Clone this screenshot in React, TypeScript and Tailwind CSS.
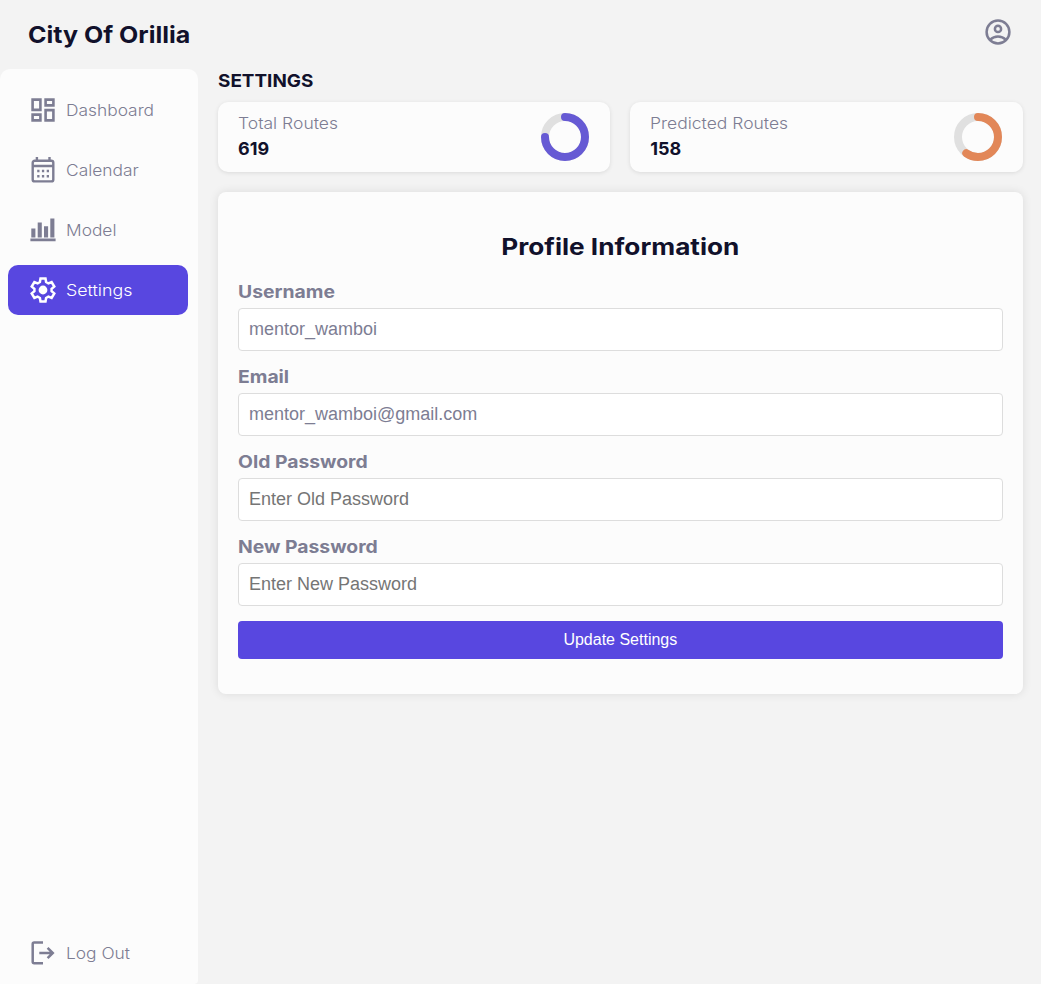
import type { ReactNode } from 'react';

function AccountIcon() {
  return (
    <svg width="30" height="30" viewBox="0 0 30 30" fill="none" stroke="currentColor" strokeWidth="2.5">
      <circle cx="15" cy="15" r="11.4" />
      <circle cx="15" cy="11.9" r="3.1" />
      <path d="M7.3 22.6c2-2.1 4.7-3.2 7.7-3.2s5.7 1.1 7.7 3.2" />
    </svg>
  );
}

function DashboardIcon() {
  return (
    <svg width="28" height="28" viewBox="0 0 28 28" fill="none" stroke="currentColor" strokeWidth="2.6">
      <path d="M3.6 3.6h7.8v10.3H3.6zM16.6 3.6h7.8v5.8h-7.8zM3.6 18.6h7.8v5.8H3.6zM16.6 14.1h7.8v10.3h-7.8z" />
    </svg>
  );
}

function CalendarIcon() {
  return (
    <svg width="28" height="28" viewBox="0 0 28 28" fill="none" stroke="currentColor" strokeWidth="2.4">
      <rect x="3.7" y="4.7" width="20.6" height="20.7" rx="2" />
      <path d="M3.7 10h20.6M7.9 1v3.5M20.5 1v3.5" />
      <path d="M8.2 15h2.3M12.9 15h2.3M17.7 15H20M8.2 20.2h2.3M12.9 20.2h2.3M17.7 20.2H20" />
    </svg>
  );
}

function ChartIcon() {
  return (
    <svg width="28" height="28" viewBox="0 0 28 28" fill="currentColor">
      <path d="M1.4 22.6h25.2v2.7H1.4zM2.3 12.6h4.1v8.8H2.3zM8.7 6.4h4.1v15H8.7zM15 10.2h4.1v11.2H15zM21.3 2.4h4.1v19h-4.1z" />
    </svg>
  );
}

function GearIcon() {
  return (
    <svg width="28" height="28" viewBox="0 0 28 28" fill="none" stroke="currentColor" strokeWidth="2.5">
      <path d="M11.5 2.6h5l.6 3.4 2.3 1.3 3.2-1.2 2.7 4.5-2.7 2.3v2.2l2.7 2.3-2.7 4.5-3.2-1.2-2.3 1.3-.6 3.4h-5l-.6-3.4-2.3-1.3-3.2 1.2-2.7-4.5 2.7-2.3v-2.2l-2.7-2.3 2.7-4.5 3.2 1.2 2.3-1.3z" />
      <circle cx="14" cy="14" r="4.4" fill="currentColor" stroke="none" />
    </svg>
  );
}

function LogoutIcon() {
  return (
    <svg width="28" height="28" viewBox="0 0 28 28" fill="none" stroke="currentColor" strokeWidth="2.5">
      <path d="M14 3.6H5.2Q3.7 3.6 3.7 5.1v17.6Q3.7 24.2 5.2 24.2H14" />
      <path d="M10.3 14h13.6M18.6 8.8l5.2 5.2-5.2 5.2" />
    </svg>
  );
}

function NavItem({ icon, label, active = false }: { icon: ReactNode; label: string; active?: boolean }) {
  return (
    <a
      className={
        active
          ? 'flex h-[50px] items-center gap-[9px] rounded-[10px] bg-[#5847e0] pl-[21px] text-white'
          : 'flex h-[50px] items-center gap-[9px] rounded-[10px] pl-[21px] text-[#7d7d93]'
      }
    >
      <span className="flex size-7 shrink-0 items-center justify-center">{icon}</span>
      <span
        className={
          active
            ? 'origin-left scale-x-[1.15] pt-[2px] text-[15.5px] font-[350]'
            : 'origin-left scale-x-[1.12] pt-[2px] text-[15.5px] font-light'
        }
      >
        {label}
      </span>
    </a>
  );
}

function Ring({ percent, color }: { percent: number; color: string }) {
  return (
    <svg width="48" height="48" viewBox="0 0 48 48" fill="none" strokeWidth="8">
      <circle cx="24" cy="24" r="20" stroke="#e0e0e0" />
      <circle
        cx="24"
        cy="24"
        r="20"
        stroke={color}
        strokeLinecap="round"
        pathLength={100}
        strokeDasharray={`${percent} 100`}
        transform="rotate(-90 24 24)"
      />
    </svg>
  );
}

function StatCard({ label, value, percent, color }: { label: string; value: string; percent: number; color: string }) {
  return (
    <div className="flex h-[70px] flex-1 items-center justify-between rounded-[10px] bg-[#fcfcfc] pr-[21px] pl-5 shadow-[0_1px_4px_rgba(0,0,0,0.1)]">
      <div className="pb-[2px]">
        <div className="h-[25px] origin-left scale-x-[1.13] text-[15.5px] leading-[25px] font-light text-[#7d7d93]">{label}</div>
        <div className="h-[25px] text-[18px] leading-[25px] font-bold text-[#11112b]">{value}</div>
      </div>
      <Ring percent={percent} color={color} />
    </div>
  );
}

function Field({ label, value, placeholder, type = 'text' }: { label: string; value?: string; placeholder?: string; type?: string }) {
  return (
    <label className="mb-[15px] block">
      <span className="mb-[5px] block h-[22px] w-fit origin-left scale-x-[1.105] text-[17.5px] leading-[22px] font-bold text-[#7d7d93]">{label}</span>
      <input
        type={type}
        defaultValue={value}
        placeholder={placeholder}
        className="block h-[43px] w-full rounded-[4px] border border-[#dddddd] bg-white px-[10px] font-['Liberation_Sans',sans-serif] text-[18px] text-[#7d7d93] placeholder:text-[#757575]"
      />
    </label>
  );
}

export default function App() {
  return (
    <div className="flex h-screen flex-col overflow-hidden bg-[#f3f3f3] font-['Inter',sans-serif]">
      <header className="flex h-[69px] shrink-0 justify-between pr-7 pl-7">
        <h1 className="origin-left scale-x-[1.087] pt-[19px] text-[23px] leading-8 font-bold text-[#11112b]">City Of Orillia</h1>
        <div className="pt-[17px] text-[#7d7d93]">
          <AccountIcon />
        </div>
      </header>
      <div className="flex min-h-0 flex-1">
        <aside className="flex w-[198px] shrink-0 flex-col justify-between rounded-t-[10px] rounded-br-[4px] bg-[#fcfcfc] pt-4 pr-[10px] pb-[6px] pl-2">
          <nav className="flex flex-col gap-[10px]">
            <NavItem icon={<DashboardIcon />} label="Dashboard" />
            <NavItem icon={<CalendarIcon />} label="Calendar" />
            <NavItem icon={<ChartIcon />} label="Model" />
            <NavItem icon={<GearIcon />} label="Settings" active />
          </nav>
          <NavItem icon={<LogoutIcon />} label="Log Out" />
        </aside>
        <main className="flex-1 pr-[18.4px] pl-5">
          <h2 className="h-[33px] w-fit origin-left scale-x-[1.05] text-[18px] leading-[24px] font-bold text-[#11112b]">SETTINGS</h2>
          <div className="flex gap-5">
            <StatCard label="Total Routes" value="619" percent={75} color="#665ad4" />
            <StatCard label="Predicted Routes" value="158" percent={60} color="#e28758" />
          </div>
          <section className="mt-5 h-[502px] rounded-[8px] bg-[#fcfcfc] px-5 pt-[39px] shadow-[0_0_10px_rgba(0,0,0,0.1)]">
            <h3 className="mb-[18px] h-8 scale-x-[1.138] text-center text-[23px] leading-8 font-bold text-[#11112b]">Profile Information</h3>
            <form>
              <Field label="Username" value="mentor_wamboi" />
              <Field label="Email" value="mentor_wamboi@gmail.com" />
              <Field label="Old Password" placeholder="Enter Old Password" type="password" />
              <Field label="New Password" placeholder="Enter New Password" type="password" />
              <button
                type="button"
                className="block h-[38px] w-full rounded-[4px] bg-[#5847e0] font-['Liberation_Sans',sans-serif] text-[16px] text-white"
              >
                Update Settings
              </button>
            </form>
          </section>
        </main>
      </div>
    </div>
  );
}
